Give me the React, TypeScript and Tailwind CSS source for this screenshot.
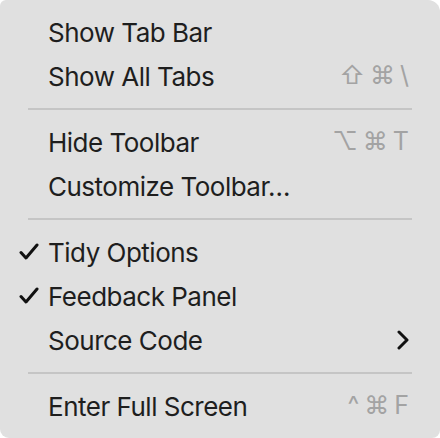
import React from "react";

type Item =
    | { type: "sep" }
    | { type: "item"; label: string; checked?: boolean; keys?: string[]; submenu?: boolean };

const items: Item[] = [
    { type: "item", label: "Show Tab Bar" },
    { type: "item", label: "Show All Tabs", keys: ["⇧", "⌘", "\\"] },
    { type: "sep" },
    { type: "item", label: "Hide Toolbar", keys: ["⌥", "⌘", "T"] },
    { type: "item", label: "Customize Toolbar…" },
    { type: "sep" },
    { type: "item", label: "Tidy Options", checked: true },
    { type: "item", label: "Feedback Panel", checked: true },
    { type: "item", label: "Source Code", submenu: true },
    { type: "sep" },
    { type: "item", label: "Enter Full Screen", keys: ["^", "⌘", "F"] },
];

function Check() {
    return (
        <svg width="20" height="18" viewBox="0 0 20 18" fill="none">
            <path
                d="M2 9.5 L7 15 L18 2"
                stroke="#111"
                strokeWidth="3"
                strokeLinecap="round"
                strokeLinejoin="round"
            />
        </svg>
    );
}

function Chevron() {
    return (
        <svg width="12" height="20" viewBox="0 0 12 20" fill="none">
            <path
                d="M2 2 L10 10 L2 18"
                stroke="#111"
                strokeWidth="3"
                strokeLinecap="round"
                strokeLinejoin="round"
            />
        </svg>
    );
}

export default function App() {
    return (
        <div className="w-[440px] h-[438px] bg-white">
            <div
                className="w-[440px] h-[438px] bg-[#e0e0e0] rounded-tl-[6px] rounded-tr-[12px] rounded-bl-[9px] rounded-br-[8px] pt-[10px] text-[26px] text-[#1e1e1e]"
                style={{ fontFamily: "Inter, 'Liberation Sans', sans-serif" }}
            >
                {items.map((item, i) =>
                    item.type === "sep" ? (
                        <div key={i} className="h-[22px] flex items-center mx-[28px]">
                            <div className="h-[2px] w-full bg-[#c5c5c5]" />
                        </div>
                    ) : (
                        <div key={i} className="h-[44px] flex items-center pr-[31px]">
                            <div className="w-[48px] flex justify-end pr-[9px]">
                                {item.checked && <Check />}
                            </div>
                            <span className="flex-1 tracking-[-0.5px]">{item.label}</span>
                            {item.keys && (
                                <span className="flex items-center gap-[5px] text-[#a3a3a3] text-[25px]">
                                    {item.keys.map((k, j) => (
                                        <span key={j}>{k}</span>
                                    ))}
                                </span>
                            )}
                            {item.submenu && <Chevron />}
                        </div>
                    )
                )}
            </div>
        </div>
    );
}
